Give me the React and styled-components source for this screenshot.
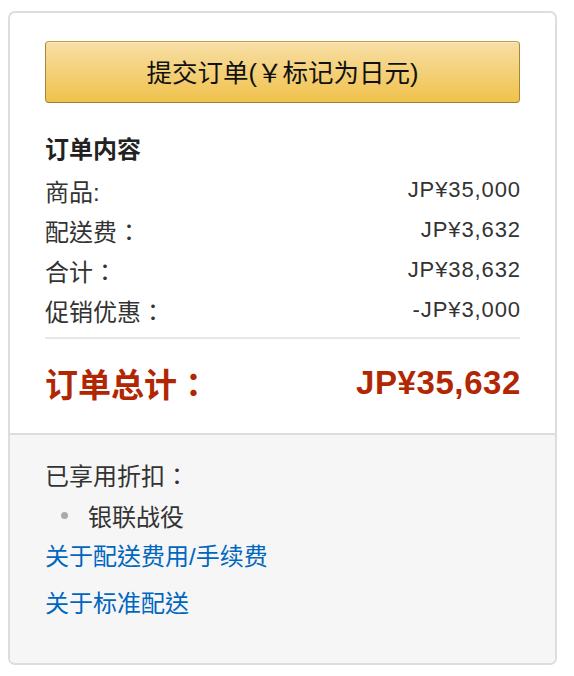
import React from "react";
import styled, { createGlobalStyle } from "styled-components";

const Global = createGlobalStyle`
  html, body { margin: 0; padding: 0; background: #fff; }
  body { font-family: "Liberation Sans", "Noto Sans CJK TC", sans-serif; color: #333; }
`;

const Page = styled.div`
  padding: 11px 17px 11px 8px;
`;

const Card = styled.div`
  border: 2px solid #dddddd;
  border-radius: 7px;
  overflow: hidden;
  background: #fff;
`;

const Top = styled.div`
  padding: 28px 35px 28px;
`;

const PlaceButton = styled.button`
  display: block;
  width: 100%;
  height: 62px;
  border: 1px solid #a88734;
  border-color: #c29b45 #a88734 #9c7e31;
  border-radius: 4px;
  background: linear-gradient(to bottom, #f7dfa5, #f0c14b);
  box-shadow: inset 0 1px 0 rgba(255, 255, 255, 0.4);
  font-family: "Liberation Sans", "Noto Sans CJK TC", sans-serif;
  font-size: 25.5px;
  color: #111;
  cursor: pointer;
  padding: 0 0 4px;
`;

const Heading = styled.div`
  margin-top: 27px;
  font-size: 24px;
  line-height: 40px;
  font-weight: 700;
  color: #222;
`;

const Row = styled.div`
  display: flex;
  justify-content: space-between;
  align-items: center;
  height: 40px;
`;

const Label = styled.span`
  font-size: 24px;
  color: #333;
`;

const Amount = styled.span`
  font-size: 22px;
  color: #333;
  letter-spacing: 0.9px;
  margin-right: -1px;
`;

const Divider = styled.hr`
  margin: 7px 0 0;
  border: 0;
  height: 2px;
  background: #e7e7e7;
`;

const TotalRow = styled.div`
  display: flex;
  justify-content: space-between;
  align-items: center;
  height: 44px;
  margin-top: 22px;
  color: #b12704;
  font-weight: 700;
`;

const TotalLabel = styled.span`
  font-size: 33px;
`;

const TotalAmount = styled.span`
  font-size: 33px;
  letter-spacing: 0.6px;
  margin-right: -1px;
`;

const Bottom = styled.div`
  border-top: 2px solid #dddddd;
  background: #f6f6f6;
  padding: 24px 35px 39px;
`;

const SubTitle = styled.div`
  font-size: 24px;
  line-height: 36px;
  color: #333;
`;

const List = styled.ul`
  list-style: none;
  margin: 0;
  padding: 0;
`;

const Item = styled.li`
  display: flex;
  align-items: center;
  height: 40px;
  font-size: 24px;
  color: #333;
  &::before {
    content: "";
    width: 7px;
    height: 7px;
    border-radius: 50%;
    background: #aaaaaa;
    margin: 0 20px 0 16px;
  }
`;

const Link = styled.a`
  display: block;
  font-size: 24px;
  line-height: 40px;
  color: #0066c0;
  text-decoration: none;
  margin-top: ${(p) => p.$gap}px;
`;

const rows = [
  ["商品:", "JP¥35,000"],
  ["配送费：", "JP¥3,632"],
  ["合计：", "JP¥38,632"],
  ["促销优惠：", "-JP¥3,000"],
];

export default function App() {
  return (
    <>
      <Global />
      <Page>
        <Card>
          <Top>
            <PlaceButton>提交订单(￥标记为日元)</PlaceButton>
            <Heading>订单内容</Heading>
            {rows.map(([l, a]) => (
              <Row key={l}>
                <Label>{l}</Label>
                <Amount>{a}</Amount>
              </Row>
            ))}
            <Divider />
            <TotalRow>
              <TotalLabel>订单总计：</TotalLabel>
              <TotalAmount>JP¥35,632</TotalAmount>
            </TotalRow>
          </Top>
          <Bottom>
            <SubTitle>已享用折扣：</SubTitle>
            <List>
              <Item>银联战役</Item>
            </List>
            <Link href="#" $gap={2}>关于配送费用/手续费</Link>
            <Link href="#" $gap={7}>关于标准配送</Link>
          </Bottom>
        </Card>
      </Page>
    </>
  );
}
